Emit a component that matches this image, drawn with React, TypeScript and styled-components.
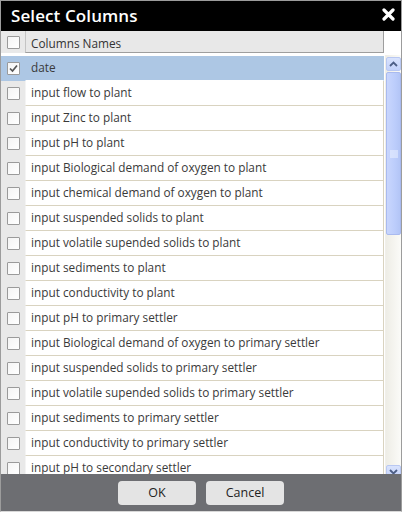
import React from "react";
import styled, { createGlobalStyle } from "styled-components";

const Global = createGlobalStyle`
  html, body { margin: 0; padding: 0; background: #ffffff; }
  body { font-family: "Open Sans", "Noto Sans", sans-serif; }
  * { box-sizing: border-box; }
`;

const Dialog = styled.div`
  width: 402px;
  height: 512px;
  border: 1px solid #9c9c9c;
  border-bottom-color: #d8d8d8;
  display: flex;
  flex-direction: column;
  background: #ffffff;
  overflow: hidden;
`;

const TitleBar = styled.div`
  height: 30px;
  flex: none;
  background: #000000;
  display: flex;
  align-items: center;
  justify-content: space-between;
  padding: 0 6px 1px 10px;
`;

const Title = styled.div`
  color: #ffffff;
  font-family: "Open Sans", sans-serif;
  font-weight: 600;
  font-size: 17px;
  letter-spacing: 0.1px;
`;

const CloseButton = styled.button`
  border: none;
  background: transparent;
  padding: 0;
  width: 14px;
  height: 14px;
  display: flex;
  align-items: center;
  justify-content: center;
  cursor: pointer;
  margin-bottom: 2px;
`;

const Body = styled.div`
  flex: 1;
  overflow: hidden;
  display: flex;
  flex-direction: column;
`;

const HeaderRow = styled.div`
  height: 22px;
  flex: none;
  display: flex;
`;

const CheckCell = styled.div<{ $selected?: boolean }>`
  width: 24px;
  flex: none;
  display: flex;
  align-items: center;
  justify-content: center;
  padding-left: 1px;
  background: ${(p) => (p.$selected ? "#adc7e4" : "#e9e9e9")};
`;

const HeaderName = styled.div`
  width: 359px;
  flex: none;
  background: #e8e8e8;
  border-left: 1px solid #c4c4c4;
  border-right: 1px solid #9e9e9e;
  border-bottom: 1px solid #9e9e9e;
  display: flex;
  align-items: center;
  padding: 2px 0 0 5px;
  font-size: 11.8px;
  color: #333333;
`;

const Content = styled.div`
  flex: 1;
  display: flex;
  min-height: 0;
  padding-top: 3px;
`;

const List = styled.div`
  width: 384px;
  flex: none;
  display: flex;
  flex-direction: column;
`;

const Row = styled.div`
  height: 25px;
  flex: none;
  display: flex;
`;

const NameCell = styled.div<{ $selected?: boolean }>`
  width: 359px;
  flex: none;
  display: flex;
  align-items: center;
  padding: 0 0 2px 5px;
  font-size: 11.8px;
  color: #3a3a3a;
  white-space: nowrap;
  background: ${(p) => (p.$selected ? "#adc7e4" : "#ffffff")};
  border-left: 1px solid ${(p) => (p.$selected ? "#adc7e4" : "#f4f4f4")};
  border-right: 1px solid ${(p) => (p.$selected ? "#adc7e4" : "#d9d3c0")};
  border-bottom: 1px solid ${(p) => (p.$selected ? "#ffffff" : "#d9d3c0")};
`;

const Box = styled.span`
  width: 13px;
  height: 13px;
  border: 1px solid #9a9a9a;
  border-radius: 1px;
  background: linear-gradient(135deg, #f4f4f4 0%, #ffffff 100%);
  display: flex;
  align-items: center;
  justify-content: center;
`;

const ScrollBar = styled.div`
  width: 16px;
  flex: none;
  height: 426px;
  margin-top: -1px;
  background: linear-gradient(90deg, #eeede6 0%, #fbfbf8 100%);
  border-left: 1px solid #f0efea;
  display: flex;
  flex-direction: column;
  align-items: center;
  padding: 2px 0 2px 0;
  gap: 1px;
`;

const ArrowButton = styled.div`
  width: 15px;
  height: 14px;
  flex: none;
  border: 1px solid #b9c8f2;
  border-radius: 2px;
  background: linear-gradient(180deg, #d9e3fd 0%, #c3d2fb 100%);
  display: flex;
  align-items: center;
  justify-content: center;
`;

const Thumb = styled.div`
  width: 15px;
  height: 163px;
  flex: none;
  border: 1px solid #a9baef;
  border-radius: 2px;
  background: linear-gradient(90deg, #c9d6fd 0%, #bccdfb 60%, #b3c5f6 100%);
  display: flex;
  align-items: center;
  justify-content: center;
`;

const Track = styled.div`
  flex: 1;
`;

const Footer = styled.div`
  height: 37px;
  flex: none;
  background: #6d6e72;
  display: flex;
  justify-content: center;
  align-items: flex-start;
  padding-top: 7px;
  gap: 10px;
`;

const Button = styled.button`
  width: 78px;
  height: 24px;
  border: none;
  border-radius: 4px;
  background: #e4e4e4;
  font-family: "Open Sans", sans-serif;
  font-size: 12.5px;
  line-height: 24px;
  color: #222222;
  padding: 0;
  display: flex;
  align-items: center;
  justify-content: center;
  cursor: pointer;
`;

const Check = () => (
  <svg width="9" height="9" viewBox="0 0 9 9">
    <path d="M1 4.5 L3.5 7 L8 1.5" fill="none" stroke="#555" strokeWidth="1.7" />
  </svg>
);

const columns = [
  "date",
  "input flow to plant",
  "input Zinc to plant",
  "input pH to plant",
  "input Biological demand of oxygen to plant",
  "input chemical demand of oxygen to plant",
  "input suspended solids to plant",
  "input volatile supended solids to plant",
  "input sediments to plant",
  "input conductivity to plant",
  "input pH to primary settler",
  "input Biological demand of oxygen to primary settler",
  "input suspended solids to primary settler",
  "input volatile supended solids to primary settler",
  "input sediments to primary settler",
  "input conductivity to primary settler",
  "input pH to secondary settler",
];

export default function App() {
  return (
    <>
      <Global />
      <Dialog>
        <TitleBar>
          <Title>Select Columns</Title>
          <CloseButton aria-label="close">
            <svg width="13" height="13" viewBox="0 0 13 13">
              <path d="M2 2 L11 11 M11 2 L2 11" stroke="#fff" strokeWidth="3.2" strokeLinecap="round" />
            </svg>
          </CloseButton>
        </TitleBar>
        <Body>
          <HeaderRow>
            <CheckCell>
              <Box />
            </CheckCell>
            <HeaderName>Columns Names</HeaderName>
          </HeaderRow>
          <Content>
            <List>
              {columns.map((c, i) => (
                <Row key={c}>
                  <CheckCell $selected={i === 0}>
                    <Box>{i === 0 && <Check />}</Box>
                  </CheckCell>
                  <NameCell $selected={i === 0}>{c}</NameCell>
                </Row>
              ))}
            </List>
            <ScrollBar>
              <ArrowButton>
                <svg width="9" height="6" viewBox="0 0 9 6">
                  <path d="M1 5 L4.5 1.5 L8 5" fill="none" stroke="#4d5f86" strokeWidth="1.8" />
                </svg>
              </ArrowButton>
              <Thumb>
                <svg width="8" height="8" viewBox="0 0 8 8">
                  <path d="M0 1 H8 M0 3 H8 M0 5 H8 M0 7 H8" stroke="#eef3ff" strokeWidth="1" />
                </svg>
              </Thumb>
              <Track />
              <ArrowButton>
                <svg width="9" height="6" viewBox="0 0 9 6">
                  <path d="M1 1 L4.5 4.5 L8 1" fill="none" stroke="#4d5f86" strokeWidth="1.8" />
                </svg>
              </ArrowButton>
            </ScrollBar>
          </Content>
        </Body>
        <Footer>
          <Button>OK</Button>
          <Button>Cancel</Button>
        </Footer>
      </Dialog>
    </>
  );
}
